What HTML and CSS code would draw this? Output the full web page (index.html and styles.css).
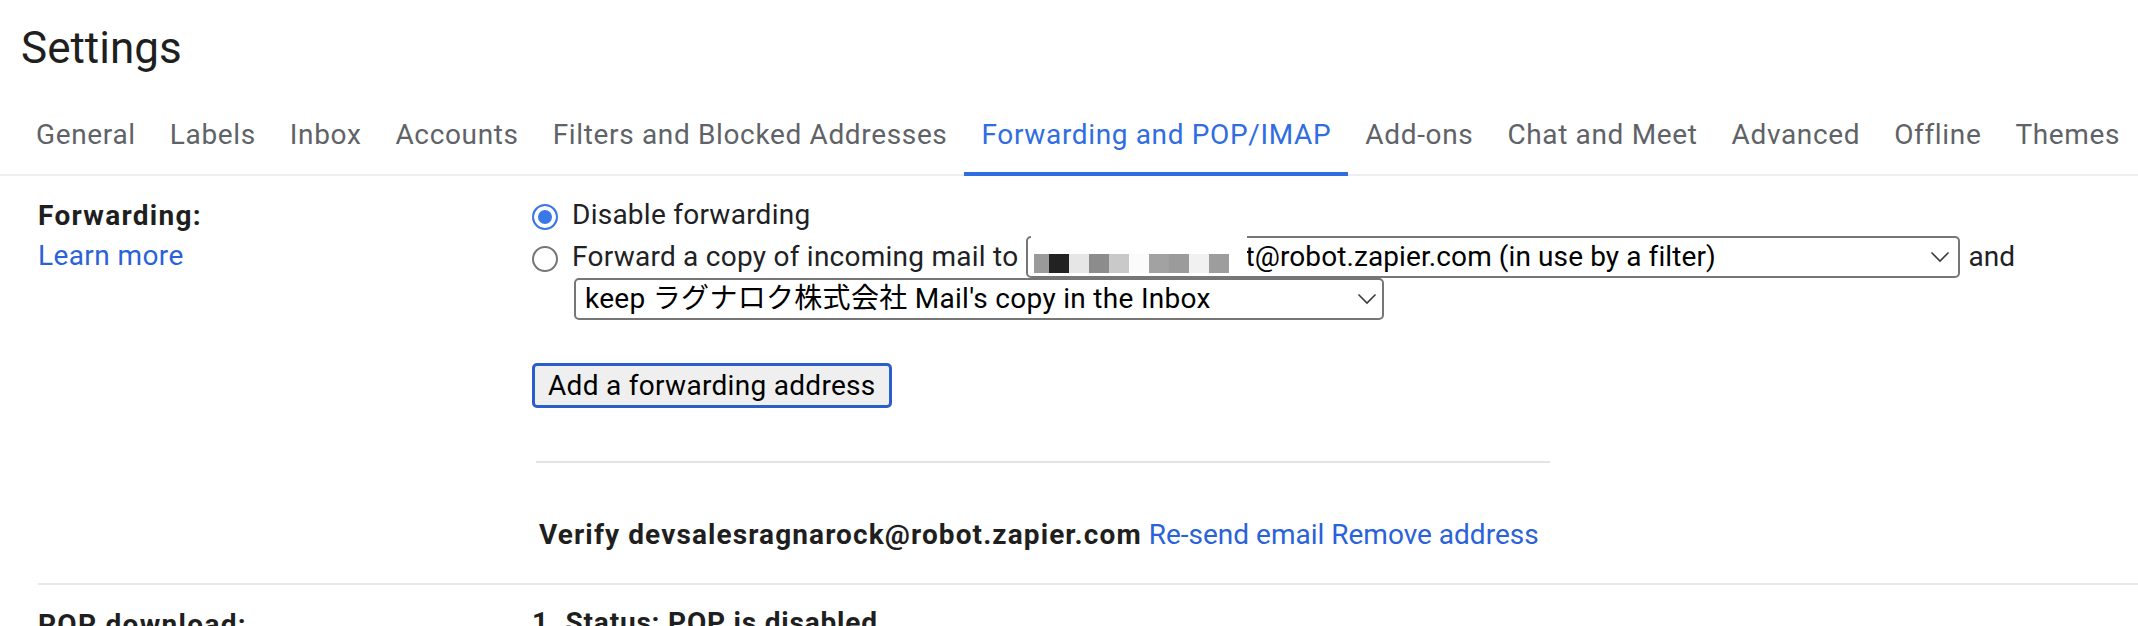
FILE: index.html
```html
<!DOCTYPE html>
<html lang="en">
<head>
<meta charset="utf-8">
<title>Settings</title>
<link rel="stylesheet" href="styles.css">
</head>
<body>
<div class="page">
  <h1 class="title">Settings</h1>
  <nav class="tabs">
    <a class="tab">General</a>
    <a class="tab">Labels</a>
    <a class="tab">Inbox</a>
    <a class="tab">Accounts</a>
    <a class="tab">Filters and Blocked Addresses</a>
    <a class="tab active">Forwarding and POP/IMAP</a>
    <a class="tab">Add-ons</a>
    <a class="tab">Chat and Meet</a>
    <a class="tab">Advanced</a>
    <a class="tab">Offline</a>
    <a class="tab">Themes</a>
  </nav>

  <section class="row">
    <div class="label">
      <div class="label-title">Forwarding:</div>
      <a class="link learn">Learn more</a>
    </div>
    <div class="value">
      <div class="line">
        <span class="radio checked"></span>
        <span class="opt">Disable forwarding</span>
      </div>
      <div class="line">
        <span class="radio"></span>
        <span class="opt">Forward a copy of incoming mail to</span>
        <div class="select select-addr">
          <div class="redact">
            <span class="px m1"></span><span class="px m2"></span><span class="px m3"></span><span class="px m4"></span><span class="px m5"></span><span class="px m6"></span><span class="px m7"></span><span class="px m8"></span><span class="px m9"></span><span class="px m10"></span>
          </div>
          <span class="select-text">t@robot.zapier.com (in use by a filter)</span>
          <svg class="chev" width="20" height="12" viewBox="0 0 20 12"><path d="M1.5 1.5 L10 10 L18.5 1.5" fill="none" stroke="#3c3c3c" stroke-width="1.6"/></svg>
        </div>
        <span class="and">and</span>
      </div>
      <div class="line indent">
        <div class="select select-keep">
          <span class="select-text">keep ラグナロク株式会社 Mail's copy in the Inbox</span>
          <svg class="chev" width="20" height="12" viewBox="0 0 20 12"><path d="M1.5 1.5 L10 10 L18.5 1.5" fill="none" stroke="#3c3c3c" stroke-width="1.6"/></svg>
        </div>
      </div>
      <button class="btn" type="button">Add a forwarding address</button>
      <hr class="divider">
      <div class="verify">
        <b class="verify-text">Verify devsalesragnarock@robot.zapier.com</b>
        <a class="link">Re-send email</a>
        <a class="link">Remove address</a>
      </div>
    </div>
  </section>

  <section class="row">
    <div class="label">
      <div class="label-title">POP download:</div>
    </div>
    <div class="value">
      <div class="status">1. Status: POP is disabled</div>
    </div>
  </section>
</div>
</body>
</html>
```

FILE: styles.css
```css
* {
  box-sizing: border-box;
}

html, body {
  margin: 0;
  padding: 0;
  background: #ffffff;
}

body {
  font-family: Roboto, "Noto Sans CJK JP", "Noto Sans", sans-serif;
  color: #202124;
  overflow: hidden;
}

.page {
  width: 2138px;
  height: 626px;
  overflow: hidden;
}

.title {
  margin: 0;
  padding: 22px 0 0 21px;
  font-size: 44px;
  line-height: 52px;
  font-weight: 400;
  color: #1f1f1f;
}

.tabs {
  display: flex;
  padding-left: 19px;
  box-shadow: inset 0 -2px 0 #eceef1;
}

.tab {
  padding: 45px 17px 21px;
  font-size: 28px;
  line-height: 32px;
  letter-spacing: 0.65px;
  color: #5f6368;
  border-bottom: 4px solid transparent;
  white-space: nowrap;
}

.tab.active {
  color: #2f6de0;
  border-bottom-color: #2f6de0;
}

.row {
  display: grid;
  grid-template-columns: 494px 1fr;
  margin-left: 38px;
  padding: 18px 0 28px;
  border-bottom: 2px solid #e6e8eb;
}

.label {
  padding-top: 2px;
  font-size: 28px;
  line-height: 40px;
}

.label-title {
  font-weight: 700;
  letter-spacing: 1.3px;
  color: #1f1f1f;
}

.link {
  display: inline-block;
  color: #2a62d8;
  cursor: pointer;
}

.label .link {
  display: block;
}

.learn {
  letter-spacing: 0.4px;
}

.value {
  font-size: 28px;
  line-height: 40px;
}

.line {
  display: flex;
  align-items: center;
  height: 42px;
  white-space: nowrap;
}

.line.indent {
  padding-left: 42px;
}

.radio {
  flex: none;
  width: 26px;
  height: 26px;
  margin: 3px 14px 0 0;
  border-radius: 50%;
  border: 2px solid #767676;
  background: #ffffff;
}

.radio.checked {
  border-color: #3b78e7;
  background: #3b78e7;
  box-shadow: inset 0 0 0 4px #ffffff;
}

.opt {
  color: #202124;
  letter-spacing: 0.25px;
}

.select {
  position: relative;
  display: flex;
  align-items: center;
  justify-content: space-between;
  height: 42px;
  border: 2px solid #767676;
  border-radius: 5px;
  color: #000000;
  background: #ffffff;
}

.select-text {
  letter-spacing: 0.1px;
}

.select-addr {
  width: 934px;
  margin-left: 8px;
  padding: 0 8px 0 217px;
}

.select-keep {
  width: 810px;
  padding: 0 5px 0 9px;
}

.select-keep .select-text {
  letter-spacing: 0.3px;
}

.chev {
  flex: none;
}

.redact {
  position: absolute;
  left: 3px;
  top: -2px;
  width: 216px;
  height: 38px;
  display: flex;
  align-items: flex-end;
  padding: 0 0 1px 3px;
  background: #ffffff;
}

.px {
  width: 20px;
  height: 19px;
}

.m1 { width: 15px; background: #9a9a9a; }
.m2 { background: #222222; }
.m3 { background: #e6e6e6; }
.m4 { background: #8c8c8c; }
.m5 { background: #c9c9c9; }
.m6 { background: #fbfbfb; }
.m7 { background: #a2a2a2; }
.m8 { background: #9b9b9b; }
.m9 { background: #f1f1f1; }
.m10 { background: #9d9d9d; }

.and {
  margin-left: 8px;
}

.btn {
  display: block;
  margin-top: 43px;
  height: 45px;
  padding: 0 13px;
  border: 3px solid #2b5ecb;
  border-radius: 5px;
  background: #efefef;
  font-family: Roboto, "Noto Sans", sans-serif;
  font-size: 28px;
  line-height: 39px;
  letter-spacing: 0.3px;
  color: #000000;
}

.divider {
  width: 1014px;
  height: 2px;
  margin: 53px 0 0 4px;
  border: 0;
  background: #e3e3e3;
}

.verify {
  margin-top: 52px;
  padding-left: 7px;
  white-space: nowrap;
}

.verify-text {
  font-weight: 700;
  letter-spacing: 1.1px;
  color: #1f1f1f;
}

.status {
  font-weight: 700;
  letter-spacing: 0.8px;
  color: #1f1f1f;
}
```
